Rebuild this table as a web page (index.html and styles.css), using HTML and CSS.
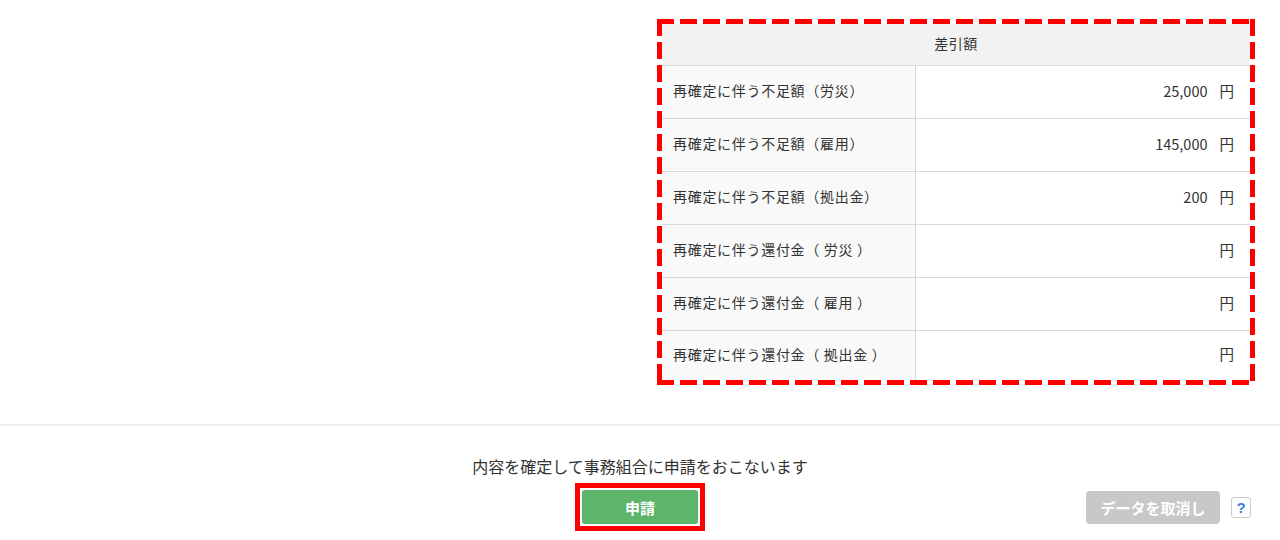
FILE: index.html
```html
<!DOCTYPE html>
<html lang="ja">
<head>
    <meta charset="UTF-8">
    <meta name="viewport" content="width=device-width, initial-scale=1.0">
    <title>差引額</title>
    <link rel="stylesheet" href="styles.css">
</head>
<body>
    <div class="content">
        <div class="highlight">
            <table class="diff-table">
                <thead>
                    <tr>
                        <th colspan="2">差引額</th>
                    </tr>
                </thead>
                <tbody>
                    <tr>
                        <td class="label">再確定に伴う不足額（労災）</td>
                        <td class="value"><span class="num">25,000</span>円</td>
                    </tr>
                    <tr>
                        <td class="label">再確定に伴う不足額（雇用）</td>
                        <td class="value"><span class="num">145,000</span>円</td>
                    </tr>
                    <tr>
                        <td class="label">再確定に伴う不足額（拠出金）</td>
                        <td class="value"><span class="num">200</span>円</td>
                    </tr>
                    <tr>
                        <td class="label">再確定に伴う還付金（ 労災 ）</td>
                        <td class="value">円</td>
                    </tr>
                    <tr>
                        <td class="label">再確定に伴う還付金（ 雇用 ）</td>
                        <td class="value">円</td>
                    </tr>
                    <tr>
                        <td class="label">再確定に伴う還付金（ 拠出金 ）</td>
                        <td class="value">円</td>
                    </tr>
                </tbody>
            </table>
        </div>
    </div>

    <div class="footer">
        <p class="notice">内容を確定して事務組合に申請をおこないます</p>
        <div class="actions">
            <div></div>
            <div class="submit-frame">
                <button class="btn-submit">申請</button>
            </div>
            <div class="side">
                <button class="btn-cancel">データを取消し</button>
                <span class="help">?</span>
            </div>
        </div>
    </div>
</body>
</html>
```

FILE: styles.css
```css
body {
    margin: 0;
    font-family: "Noto Sans CJK JP", "Noto Sans", sans-serif;
    color: #333;
    background: #fff;
}
.content {
    display: flex;
    justify-content: flex-end;
    padding: 19px 25px 39px 0;
}
.highlight {
    padding: 5px;
    background:
        repeating-linear-gradient(90deg, #f00 0 17px, transparent 17px 23px) top left / 100% 5px no-repeat,
        repeating-linear-gradient(90deg, #f00 0 17px, transparent 17px 23px) bottom left / 100% 5px no-repeat,
        repeating-linear-gradient(180deg, #f00 0 17px, transparent 17px 23px) top left / 5px 100% no-repeat,
        repeating-linear-gradient(180deg, #f00 0 17px, transparent 17px 23px) top right / 5px 100% no-repeat;
}
.diff-table {
    width: 588px;
    border-collapse: collapse;
    font-size: 14px;
}
.diff-table th,
.diff-table td {
    box-sizing: border-box;
    padding: 0 0 3px;
}
.diff-table th {
    height: 41px;
    font-weight: normal;
    letter-spacing: 0.5px;
    background: #f2f2f2;
    border-bottom: 1px solid #d9d9d9;
}
.diff-table td {
    height: 53px;
    border-bottom: 1px solid #d9d9d9;
}
.diff-table tr:last-child td {
    border-bottom: none;
    height: 50px;
}
.label {
    width: 253px;
    padding-left: 11px !important;
    letter-spacing: 0.7px;
    background: #f9f9f9;
    border-right: 1px solid #d9d9d9;
}
.value {
    text-align: right;
    padding-right: 16px !important;
    font-size: 14.5px;
}
.num {
    margin-right: 12px;
}
.footer {
    border-top: 2px solid #eee;
    padding-top: 29px;
}
.notice {
    margin: 0 0 6px;
    text-align: center;
    font-size: 16px;
    line-height: 22px;
}
.actions {
    display: grid;
    grid-template-columns: 1fr auto 1fr;
    align-items: center;
}
.submit-frame {
    border: 5px solid #f00;
    padding: 2px;
    background: #fff;
}
.btn-submit {
    display: block;
    width: 116px;
    height: 34px;
    border: none;
    border-radius: 3px;
    background: #5cb56b;
    color: #fff;
    font-family: inherit;
    font-size: 15px;
    font-weight: bold;
}
.side {
    display: flex;
    justify-content: flex-end;
    align-items: center;
    gap: 11px;
    padding-right: 29px;
}
.btn-cancel {
    width: 134px;
    height: 33px;
    border: none;
    border-radius: 4px;
    background: #c8c8c8;
    color: #fff;
    font-family: inherit;
    font-size: 15px;
    font-weight: bold;
}
.help {
    display: flex;
    justify-content: center;
    align-items: center;
    width: 18px;
    height: 19px;
    border: 1px solid #ccc;
    border-radius: 3px;
    color: #3a7be0;
    font-family: "Liberation Sans", sans-serif;
    font-size: 15px;
    font-weight: bold;
}
```
